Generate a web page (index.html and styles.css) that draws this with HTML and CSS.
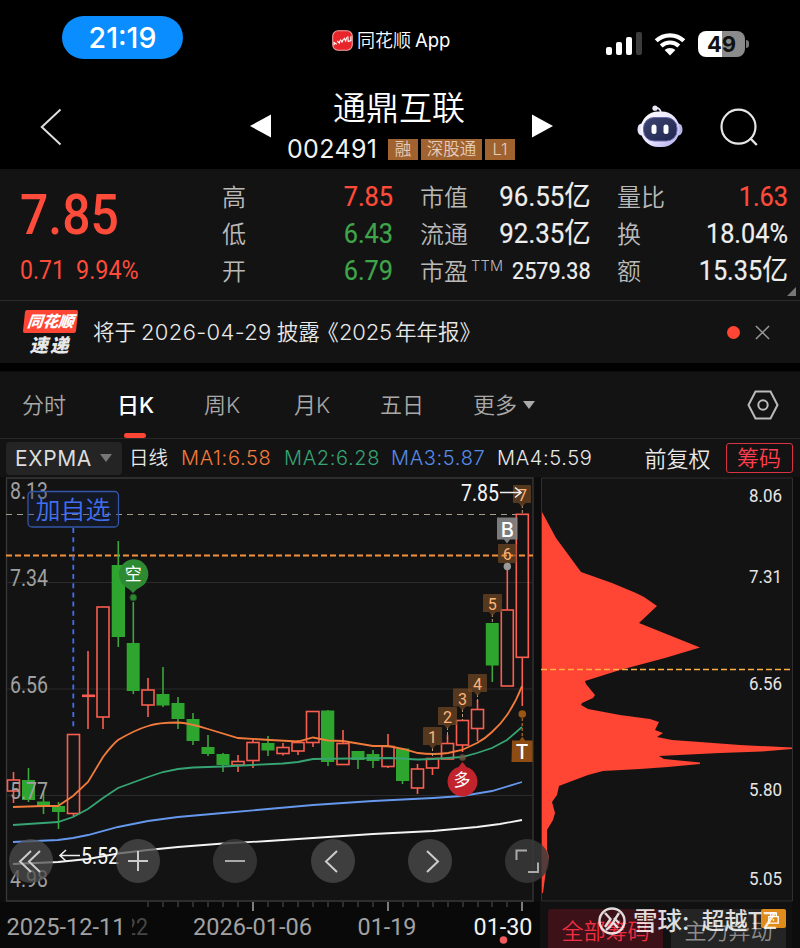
FILE: index.html
```html
<!DOCTYPE html>
<html lang="zh-CN">
<head>
<meta charset="utf-8">
<title>通鼎互联 002491</title>
<link rel="stylesheet" href="styles.css">
</head>
<body>
<div class="status">
  <div class="clock">21:19</div>
  <div class="island">
    <svg class="applogo" viewBox="0 0 20 20"><rect x=".7" y=".7" width="18.6" height="18.6" rx="5" fill="#e8252b" stroke="#f7a6a4" stroke-width="1"/><path d="M2 14.500v-2.500l2.500 1.500M5 10.500l2 2 .5-2.500M8 9l1.500 2.500 1.500-3M11.500 7.500l1.500 3 1-3.500M15 6l.5 5 2.500-1V6" fill="none" stroke="#fff" stroke-width="1.100"/></svg>
    <span class="appname">同花顺</span><span class="appword">App</span>
  </div>
  <div class="sysicons">
    <svg class="signal" viewBox="0 0 36 24"><rect x="0" y="15" width="6" height="8" rx="2" fill="#fff"/><rect x="10" y="10" width="6" height="13" rx="2" fill="#fff"/><rect x="20" y="5" width="6" height="18" rx="2" fill="#fff"/><rect x="30" y="0" width="6" height="23" rx="2" fill="#3c3c3c"/></svg>
    <svg class="wifi" viewBox="0 0 32 24"><path d="M2.200 8.800a20 20 0 0 1 27.600 0" fill="none" stroke="#fff" stroke-width="4.300"/><path d="M7.200 14a12.700 12.700 0 0 1 17.600 0" fill="none" stroke="#fff" stroke-width="4"/><path d="M16 23.500l-5.400-5.400a7.800 7.800 0 0 1 10.800 0z" fill="#fff"/></svg>
    <div class="battery"><span>49</span></div><i class="nub"></i>
  </div>
</div>

<header class="head">
  <svg class="back" viewBox="0 0 22 38"><path d="M20.500 1.500L1.800 19l18.700 17.500" fill="none" stroke="#dedede" stroke-width="2"/></svg>
  <svg class="prev" viewBox="0 0 22 24"><path d="M0 12L22 0v24z" fill="#fff"/></svg>
  <div class="stock">
    <h1>通鼎互联</h1>
    <div class="codeline"><span class="code">002491</span><span class="tag t1">融</span><span class="tag t3">深股通</span><span class="tag t1">L1</span></div>
  </div>
  <svg class="next" viewBox="0 0 22 24"><path d="M22 12L0 0v24z" fill="#fff"/></svg>
  <svg class="robot" viewBox="0 0 46 44">
    <defs><linearGradient id="shell" x1="0" y1="0" x2="1" y2="1"><stop offset="0" stop-color="#fff"/><stop offset=".55" stop-color="#e8e4ff"/><stop offset="1" stop-color="#a9a6e8"/></linearGradient>
    <linearGradient id="face" x1="0" y1="0" x2="1" y2="1"><stop offset="0" stop-color="#3d4670"/><stop offset="1" stop-color="#1e2550"/></linearGradient></defs>
    <path d="M17.500 3c4-.5 6 1 6.500 5" fill="none" stroke="#e6e6f4" stroke-width="1.600"/><circle cx="18" cy="3.200" r="2.600" fill="#e9e9f7"/>
    <ellipse cx="4.500" cy="24.500" rx="4" ry="6" fill="#e5e5fa"/><ellipse cx="41.500" cy="24.500" rx="4" ry="6" fill="#b6b3e8"/>
    <rect x="3.500" y="6.500" width="39" height="35.500" rx="17.700" fill="url(#shell)"/><rect x="6.500" y="12.500" width="33.500" height="23.500" rx="10.500" fill="url(#face)" stroke="#6c6aa8" stroke-width="1"/>
    <rect x="14.500" y="19.500" width="5" height="9.500" rx="2.500" fill="#fff"/><rect x="26.500" y="19.500" width="5" height="9.500" rx="2.500" fill="#fff"/>
  </svg>
  <svg class="search" viewBox="0 0 40 40"><circle cx="19.500" cy="18.700" r="17" fill="none" stroke="#e6e6e6" stroke-width="2.200"/><path d="M31 30l6.800 7" stroke="#e6e6e6" stroke-width="2.400"/></svg>
</header>

<section class="quote">
  <div class="price"><div class="last"><b>7.85</b></div><div class="chg"><span>0.71</span><span>9.94%</span></div></div>
  <dl class="c1"><dt>高</dt><dd class="red">7.85</dd><dt>低</dt><dd class="green">6.43</dd><dt>开</dt><dd class="green">6.79</dd></dl>
  <dl class="c2"><dt>市值</dt><dd>96.55<em>亿</em></dd><dt>流通</dt><dd>92.35<em>亿</em></dd><dt>市盈<sup>TTM</sup></dt><dd class="small">2579.38</dd></dl>
  <dl class="c3"><dt>量比</dt><dd class="red">1.63</dd><dt>换</dt><dd>18.04%</dd><dt>额</dt><dd>15.35<em>亿</em></dd></dl>
  <i class="corner"></i>
</section>

<section class="notice">
  <div class="brand"><span class="flag">同花顺</span><span class="sudi">速递</span></div>
  <p>将于<span class="d1">2026-04-29</span>披露<span class="lq">《</span><span class="d2">2025</span>年年报》</p>
  <i class="dot"></i>
  <svg class="close" viewBox="0 0 16 16"><path d="M1 1l14 14M15 1L1 15" stroke="#999" stroke-width="1.600"/></svg>
</section>

<nav class="tabs">
  <span>分时</span><span class="on">日K</span><span>周K</span><span>月K</span><span>五日</span><span>更多<i></i></span>
  <svg class="hex" viewBox="0 0 32 30"><path d="M8.500 1.500h15L30.500 15l-7 13.500h-15L1.500 15z" fill="none" stroke="#bbb" stroke-width="2"/><circle cx="16" cy="15" r="4.700" fill="none" stroke="#bbb" stroke-width="2"/></svg>
</nav>

<div class="ind">
  <div class="expma">EXPMA<i></i></div><span class="period">日线</span>
  <span class="ma m1">MA1:6.58</span><span class="ma m2">MA2:6.28</span><span class="ma m3">MA3:5.87</span><span class="ma m4">MA4:5.59</span>
  <span class="adj">前复权</span><span class="chip">筹码</span>
</div>

<main class="charts">
  <svg class="kline" viewBox="0 477 540 471">
    <rect x="0" y="902" width="540" height="46" fill="#090909"/>
    <path d="M6.500 901V478H533v423z" fill="#131313" stroke="#383838" stroke-width="1.300"/>
    <path d="M7 582.500h526M7 689h526M7 795.500h526" stroke="#2b2b2b"/>
    <g class="axis"><text x="10" y="498.500" textLength="38" lengthAdjust="spacingAndGlyphs">8.13</text><text x="10" y="586" textLength="38" lengthAdjust="spacingAndGlyphs">7.34</text><text x="10" y="692.500" textLength="38" lengthAdjust="spacingAndGlyphs">6.56</text></g>
    <path d="M6 514.500h516" stroke="#a79c8a" stroke-width="1.200" stroke-dasharray="6 5"/>
    <path d="M6 555.500h527" stroke="#f5923c" stroke-width="1.800" stroke-dasharray="6 3"/>
    <rect x="28" y="491.500" width="90.500" height="35.500" rx="4" fill="#14234a" fill-opacity=".3" stroke="#3555a8" stroke-width="1.300"/>
    <text x="35.500" y="519" class="add" textLength="75">加自选</text>
    <path d="M73.300 528v202" stroke="#3f6ff0" stroke-width="1.800" stroke-dasharray="5 4.200"/>
    <g class="up">
      <path d="M13.500 772v8m0 11v12M73.500 813v3M88 651v78M103 717v12M148 678v12m0 15v12M238 755v6m0 5v6M253 739v3m0 18v8"/>
      <path d="M283 743v4m0 7v1.500M298 740v2m0 9v4M313 742v5M343 730v13M388 734v12m0 20v2M417.500 764v5m0 19v6M432.500 768v7M447.500 735v8M462.500 745v7M477.500 700v9m0 19v13M507.300 567v43M522.300 657v49"/>
      <rect x="7.500" y="780" width="12" height="11"/><rect x="67.500" y="734.500" width="12" height="79"/><path d="M82 695.800h13" stroke-width="2.600"/><rect x="97" y="607" width="12" height="110"/><rect x="142" y="690" width="12" height="15"/><rect x="232" y="761.500" width="12" height="3.500"/><rect x="247" y="742.500" width="12" height="18"/>
      <rect x="277" y="747.500" width="12" height="6"/><rect x="292" y="742.500" width="12" height="8.500"/><rect x="306.500" y="711.500" width="12.500" height="31"/><rect x="337" y="743.500" width="12" height="21"/><rect x="382" y="746.500" width="12" height="20"/><rect x="411.500" y="769" width="12" height="19"/><rect x="426.500" y="758.500" width="12" height="9.500"/><rect x="441.500" y="743.500" width="12" height="15.500"/><rect x="456.500" y="720.500" width="12" height="24.500"/><rect x="471.500" y="709.500" width="12" height="19"/><rect x="501.300" y="610" width="12" height="76"/><rect x="516.300" y="514.300" width="12" height="143"/>
    </g>
    <g class="down">
      <path d="M28.500 768v34M43.500 791v23M58.500 802v27M118.300 541v106M133.300 602v92M163 667v40M178 697v32M193 713v32M208 735v21M223 753v19M268 736v20M328 710v56M358 751v18M373 750v18M402.500 748v36M492.300 623v59"/>
      <path d="M22 780h13v20H22zM37 801.500h13v5H37zM52 806h13v6H52zM111.700 565h13.300v72h-13.300zM126.700 643h13v48h-13zM156.500 694h13v11.500h-13zM171.500 703h13v16h-13zM186.500 719h13v22h-13zM201.500 747h13v7h-13zM216.500 754h13v11h-13zM261.500 743h13v7.500h-13zM321 710.500h13.300V762H321zM351.500 751h13v9h-13zM366.500 754h13v7h-13zM396 748.500h13.300V781H396zM485.800 623h13v42.500h-13z" fill="#2ea52f" stroke="none"/>
    </g>
    <g class="lines">
      <path stroke="#f27b3c" d="M13 807L43 806H58L73 796L88 782L103 757Q112 745 118 740Q135 730 148 726Q158 722.500 178 722.500Q188 723 208 729L238 738L270 740L298 741.500L313 737.500L328 740.500L343 741L373 746H388L403 749L418 753Q433 755 448 753L462 750L477 743Q486 738 492 732Q501 724 507 715Q516 702 522 686"/>
      <path stroke="#36a473" d="M13 825L58 822L73 817L88 809L103 798L118 788L148 777L163 772L178 769L193 767.500L223 766.500L253 765L283 763.500L298 762L313 759L390 758L418 759.500L433 759L462 757L477 753L492 748L507 740L522 727"/>
      <path stroke="#6698ee" d="M13 842L58 840L73 838L88 835L118 827L148 821L178 817L223 813L268 809L313 805L373 801L433 798L462 796L492 791L522 782"/>
      <path stroke="#f4f4f4" d="M13 864L58 862L88 859L118 853.500L148 850L178 847L223 843.500L268 841L313 838L373 834L433 831L477 827L500 824L522 820"/>
    </g>
    <g class="axis"><text x="10" y="799" textLength="38" lengthAdjust="spacingAndGlyphs">5.77</text><text x="10" y="886.500" textLength="38" lengthAdjust="spacingAndGlyphs">4.98</text></g>
    <path d="M60 855.500h20M66 850l-6 5.500 6 5.500" fill="none" stroke="#eee" stroke-width="1.600"/><text x="81" y="863.500" class="mark" textLength="38" lengthAdjust="spacingAndGlyphs">5.52</text>
    <g stroke="#b99c79" stroke-dasharray="3 2"><path d="M432.500 748v10M447.500 727v12M462.500 709v11M477.500 694v10M492.300 614v9M522.300 505v8"/></g>
    <g class="flags">
      <path d="M424 727h17q1 0 1 1v17h-6l-3.500 4-3.500-4h-6v-17q0-1 1-1z"/>
      <path d="M439 707h17q1 0 1 1v17h-6l-3.500 4-3.500-4h-6v-17q0-1 1-1z"/>
      <path d="M454 688.500h17q1 0 1 1v17h-6l-3.500 4-3.500-4h-6v-17q0-1 1-1z"/>
      <path d="M469 674h17q1 0 1 1v17h-6l-3.500 4-3.500-4h-6v-17q0-1 1-1z"/>
      <path d="M484 594h17q1 0 1 1v17h-6l-3.500 4-3.500-4h-6v-17q0-1 1-1z"/>
      <rect x="498" y="544" width="18.500" height="19" rx="1"/>
      <path d="M514 485h16q1 0 1 1v17h-5.500l-3.500 4-3.500-4h-5.500v-17q0-1 1-1z"/>
    </g>
    <g class="nums"><text x="432.500" y="743">1</text><text x="447.500" y="723">2</text><text x="462.500" y="704.500">3</text><text x="477.500" y="690">4</text><text x="492.300" y="610">5</text><text x="507.300" y="560">6</text><text x="522.500" y="500.500">7</text></g>
    <text x="461" y="500.500" class="mark" textLength="38" lengthAdjust="spacingAndGlyphs">7.85</text><path d="M500 492.500h21M515 487.500l6 5-6 5" fill="none" stroke="#eee" stroke-width="1.600"/>
    <path d="M497 517.500h20.500v22H510l-3 4-3-4h-7z" fill="#858585" fill-opacity=".92"/><text x="507.200" y="536.500" class="letter">B</text><circle cx="507.300" cy="566.500" r="3.700" fill="#999"/>
    <path d="M502 555.500h11" stroke="#f5923c" stroke-width="1.500" stroke-dasharray="5 2"/>
    <path d="M522.300 718v20" stroke="#9a5a1b" stroke-dasharray="3 2" stroke-width="1.500"/><circle cx="522.300" cy="714" r="3.800" fill="#995616"/>
    <path d="M512 740.500h7.500l2.800-4 2.800 4h7.500V762H511.500z" fill="#8c4c14"/><text x="522" y="758.500" class="letter">T</text>
    <circle cx="133.300" cy="597.500" r="3.500" fill="#2c8730" stroke="#174d1a"/><path d="M119 574a14.700 14.700 0 1 1 27 8c-2 4-8 6-10 8l-3 3-3-3c-2-2-7-4-9-8a15 15 0 0 1-2-8z" fill="#2d8a32"/><text x="133.300" y="580" class="bubble">空</text>
    <circle cx="462.500" cy="757.500" r="3.300" fill="#6f5a45" opacity=".8"/><path d="M462.500 762l-4 5a15 15 0 1 0 8 0z" fill="#c1242c"/><text x="462" y="786" class="bubble">多</text>
    <path d="M148 902v5M163 902v5M178 902v5M193 902v5M208 902v5M223 902v5M238 902v5M268 902v5M283 902v5M298 902v5M313 902v5M328 902v5M343 902v5M358 902v5M373 902v5M403 902v5M418 902v5M433 902v5M448 902v5M463 902v5M478 902v5M492 902v5M507 902v5" stroke="#555"/><path d="M253 902v9M388 902v9M522 902v9" stroke="#bbb" stroke-width="1.300"/>
    <g class="dates"><text x="124" y="934.500" textLength="24" lengthAdjust="spacingAndGlyphs" opacity=".4">22</text><rect x="6" y="912" width="126" height="30" fill="#090909"/><text x="6.500" y="934.500" textLength="119" lengthAdjust="spacingAndGlyphs">2025-12-11</text><text x="193" y="934.500" textLength="119" lengthAdjust="spacingAndGlyphs">2026-01-06</text><text x="357.500" y="934.500" textLength="59" lengthAdjust="spacingAndGlyphs">01-19</text><text x="473.500" y="934.500" textLength="59" lengthAdjust="spacingAndGlyphs" class="now">01-30</text></g>
    <circle cx="503.500" cy="940" r="3.800" fill="#f25a60"/>
  </svg>

  <div class="side">
    <svg class="dist" viewBox="540 477 260 425">
      <path d="M541.500 901V478H792.500v423z" fill="#131313" stroke="#303030"/>
      <path fill="#ff4534" d="M542 512L556 538L581 572L612 583L636 593L644 597L657 606L639 623L700 647.500L665 658L620 670L585 681L586 684L595 695L593 698L582 703L581 705L588 709L620 715L650 719L659 722L655 730L663 733L657 737L672 740L700 742L740 745L792 747.500V749L762 751.500L720 753L659 756L664 759L700 762.500V764L668 767L640 769L603 771L588 775L572 781L559 786L557 795L552 802L555 813L553 820L547 830V850L549 857L546 870L543 893H542z"/>
      <path d="M541 669.500h251" stroke="#ffb040" stroke-width="1.600" stroke-dasharray="6 3"/>
      <g class="prices"><text x="749" y="501.500" textLength="33" lengthAdjust="spacingAndGlyphs">8.06</text><text x="749" y="583" textLength="33" lengthAdjust="spacingAndGlyphs">7.31</text><text x="749" y="689.500" textLength="33" lengthAdjust="spacingAndGlyphs">6.56</text><text x="749" y="795.500" textLength="33" lengthAdjust="spacingAndGlyphs">5.80</text><text x="749" y="885" textLength="33" lengthAdjust="spacingAndGlyphs">5.05</text></g>
    </svg>
    <div class="sidebtns"><span class="all">全部筹码</span><span class="main">主力异动</span></div>
  </div>

  <div class="ctrls">
    <svg viewBox="0 0 44 44"><path d="M22 12L11 22.500 22 33M31 12L20 22.500 31 33"/></svg>
    <svg viewBox="0 0 44 44"><path d="M12 22h20M22 12v20"/></svg>
    <svg viewBox="0 0 44 44" class="dim"><path d="M12 22h20"/></svg>
    <svg viewBox="0 0 44 44"><path d="M26 12L15 22.500 26 33"/></svg>
    <svg viewBox="0 0 44 44"><path d="M19 12l11 10.500L19 33"/></svg>
    <svg viewBox="0 0 44 44" class="dim"><path d="M11.500 21v-9.500H22M33 23.500v9.500H23"/></svg>
  </div>
  <div class="lock"><svg viewBox="0 0 18 16"><path d="M4 6.500h10v7H4zM6 6V2.500h6V6M9 9v2" fill="none" stroke="#fff" stroke-width="1.400"/></svg></div>
  <div class="water"><svg viewBox="0 0 28 28"><circle cx="14" cy="14" r="12.500"/><path d="M7 6l5.500 6-5.500 8M21 6l-7 11c-1 2-3 4-6 6M15.500 16l4.500 5M16 11l5 5"/></svg><span>雪球:</span><span>超越TZ</span></div>
</main>
</body>
</html>
```

FILE: styles.css
```css
* { box-sizing: border-box; }
body { margin: 0; width: 800px; height: 948px; overflow: hidden; background: #000; color: #e8e8e8; font-family: Inter, "Noto Sans CJK SC", sans-serif; font-weight: 350; line-height: 1; }
svg { display: block; flex: none; }
i { font-style: normal; display: block; flex: none; }

.status { height: 80px; display: flex; padding-left: 62px; align-items: flex-start; }
.clock { margin-top: 16px; width: 121px; height: 43px; border-radius: 22px; background: #0a8dff; color: #fff; font-size: 28.500px; font-weight: 450; line-height: 43px; text-align: center; }
.island { margin: 29px 0 0 149px; width: 274px; display: flex; height: 22px; align-items: center; color: #fff; }
.applogo { width: 21px; height: 21px; }
.appname { font-size: 18px; margin: 2px 0 0 4px; }
.appword { font-size: 18.500px; margin-left: 4px; margin-top: 1px; font-weight: 400; }
.sysicons { display: flex; margin-top: 31px; align-items: center; }
.signal { width: 36px; height: 24px; }
.wifi { width: 32px; height: 24px; margin-left: 12px; }
.battery { width: 47px; height: 26px; margin-left: 12px; border-radius: 8px; background: linear-gradient(90deg, #fff 50%, #8b8b8b 50%); color: #111; text-align: center; font-size: 22px; line-height: 26px; font-weight: 700; }
.nub { width: 3px; height: 8px; border-radius: 0 3px 3px 0; background: #777; margin-left: 1px; }

.head { height: 89px; display: flex; align-items: flex-start; padding-left: 40px; }
.back { width: 22px; height: 38px; margin-top: 28px; }
.prev { width: 21px; height: 24px; margin: 34px 0 0 188px; }
.stock { width: 261px; }
.stock h1 { margin: 11px 0 0; padding-right: 5px; font-size: 33px; font-weight: 350; line-height: 34px; text-align: center; color: #fff; }
.codeline { display: flex; align-items: center; margin: 12px 0 0 16px; height: 24px; gap: 3px; }
.code { width: 98px; font-size: 25px; font-weight: 400; color: #f2f2f2; letter-spacing: .35px; }
.tag { height: 21px; background: #a0622f; color: #e4cdb9; font-size: 16.500px; line-height: 21px; text-align: center; }
.t1 { width: 30px; }
.t3 { width: 61px; }
.next { width: 21px; height: 24px; margin-top: 34px; }
.robot { width: 46px; height: 44px; margin: 25px 0 0 84px; }
.search { width: 40px; height: 40px; margin: 28px 0 0 36px; }

.quote { height: 132px; background: #131313; display: flex; position: relative; border-bottom: 1px solid #2b2b2b; font-family: Roboto, "Noto Sans CJK SC", sans-serif; }
.price { width: 222px; padding: 18px 0 0 20px; color: #ff4c3a; }
.last { height: 56px; font-size: 56px; line-height: 56px; }
.last b { display: inline-block; font-weight: 500; transform: scaleX(.89); transform-origin: left; }
.chg { display: flex; margin-top: 15px; font-size: 25px; font-weight: 400; }
.chg span { width: 56px; transform: scaleX(.92); transform-origin: left; }
.chg span + span { transform: scaleX(.935); }
dl { margin: 9px 0 0; display: grid; flex: none; grid-template-columns: max-content minmax(0, 1fr); grid-auto-rows: 37px; align-items: center; height: 112px; }
.c1 { width: 171px; }
.c2 { width: 171px; margin-left: 27px; }
.c3 { width: 171px; margin-left: 26px; }
dt { font-size: 24px; color: #b9b9b9; white-space: nowrap; height: 37px; line-height: 41px; }
dt sup { font-family: Inter; font-size: 14.500px; line-height: 0; vertical-align: 9px; letter-spacing: .3px; margin-left: 3px; }
dd { margin: 0; height: 37px; line-height: 38px; font-size: 27.500px; font-weight: 400; display: flex; justify-content: flex-end; white-space: nowrap; transform: scaleX(.92); transform-origin: right; color: #eee; -webkit-text-stroke: .2px; }
.c2 dd { transform: scaleX(.94); }
dd em { font-style: normal; font-size: 28px; }
.c2 dd.small { font-size: 24px; transform: scaleX(.9); }
dd.red { color: #ff4c3a; }
dd.green { color: #3fa54a; }
.corner { position: absolute; right: 4px; bottom: 4px; border-left: 9px solid transparent; border-bottom: 9px solid #777; }

.notice { height: 62px; background: #131313; display: flex; align-items: center; padding-left: 22px; }
.brand { width: 56px; display: flex; flex-direction: column; align-items: center; font-style: italic; font-weight: 900; }
.flag { width: 53px; height: 23px; line-height: 23px; background: #ff4534; color: #fff; border-radius: 2px; transform: skewX(-6deg); font-size: 15.500px; text-align: center; }
.sudi { font-size: 18.500px; letter-spacing: 2px; margin-top: 3px; height: 19px; color: #e8e8e8; }
.notice p { margin: 1px 0 0 15px; font-size: 21.500px; width: 625px; white-space: nowrap; }
.notice p span { font-size: 22px; letter-spacing: .35px; }
.notice p .lq { margin-left: -3px; }
.notice p .d1 { margin: 0 5px; }
.notice p .d2 { margin-right: 3px; letter-spacing: -.2px; }
.dot { width: 13px; height: 13px; border-radius: 50%; background: #ff4534; margin-left: 9px; }
.close { width: 15px; height: 15px; margin-left: 15px; }

.tabs { margin-top: 8px; height: 68px; background: #131313; border-bottom: 1px solid #292929; border-top: 1px solid #0d0d0d; display: flex; padding-left: 22px; font-size: 22px; color: #a9a9a9; line-height: 66px; }
.tabs span { position: relative; white-space: nowrap; width: 90px; }
.tabs span:first-child { width: 95px; }
.tabs span.on { width: 87px; color: #fff; font-weight: 500; }
.tabs span.on::after { content: ""; position: absolute; left: 7px; bottom: 0; width: 22px; height: 5px; border-radius: 3px; background: #ff4534; }
.tabs span:nth-child(4) { width: 86px; }
.tabs span:nth-child(5) { width: 93px; }
.tabs span:nth-child(6) { width: 274px; display: flex; align-items: center; }
.tabs i { margin-left: 6px; border: 6px solid transparent; border-top: 8px solid #aaa; border-bottom: 0; }
.hex { width: 32px; height: 30px; margin-top: 18px; }

.ind { height: 38px; background: #131313; display: flex; align-items: center; padding: 0 7px 0 6px; white-space: nowrap; }
.ind > * { flex: none; }
.expma { width: 116px; height: 33px; border-radius: 4px; background: #242424; color: #ddd; font-size: 21px; letter-spacing: .6px; font-weight: 400; padding-left: 9px; display: flex; align-items: center; }
.expma i { margin-left: 8px; border: 6px solid transparent; border-top: 8px solid #777; border-bottom: 0; }
.period { margin: 1px 0 0 7px; width: 52px; font-size: 19.500px; }
.ma { letter-spacing: .65px; width: 103px; font-weight: 350; font-size: 20px; }
.m2 { width: 107px; } .m3 { width: 106px; } .m4 { width: 147.500px; }
.m1 { color: #f27b3c; } .m2 { color: #36a473; } .m3 { color: #568be8; }
.adj { font-size: 22px; width: 81px; padding-top: 1px; }
.chip { width: 67px; height: 30px; border: 1px solid #d93242; border-radius: 3px; color: #ff3f50; font-size: 22px; line-height: 28px; text-align: center; }

.charts { position: relative; height: 471px; display: flex; background: #0d0d0d; }
.kline { width: 540px; height: 471px; }
.side { width: 260px; display: flex; flex-direction: column; }
.dist { width: 260px; height: 425px; }
.sidebtns { display: flex; gap: 8px; height: 46px; padding: 7px 0 0 8px; background: #111; border-right: 8px solid #0d0d0d; }
.sidebtns span { width: 115px; height: 39px; border-radius: 3px 3px 0 0; line-height: 45px; text-align: center; font-size: 22px; }
.all { background: #3c1117; color: #f12e43; }
.main { background: #242424; color: #8d8d8d; }
svg text { font-family: Roboto, "Noto Sans CJK SC", sans-serif; font-weight: 400; }
.axis text { font-size: 23px; fill: #a0a0a0; }
svg .mark { font-size: 23px; fill: #f4f4f4; }
.prices text { font-size: 18.500px; fill: #e6e6e6; }
.dates text { font-size: 24px; fill: #a2a2a2; }
.dates .now { fill: #f2f2f2; }
svg .add { font-size: 25px; fill: #3f6ff0; font-weight: 350; }
.up { fill: none; stroke: #fa5e50; stroke-width: 1.600; }
.down { stroke: #3da63e; stroke-width: 1.600; }
.lines { fill: none; stroke-width: 1.800; }
.flags { fill: #724923; fill-opacity: .7; }
.nums text { font-size: 16px; fill: #ffb477; text-anchor: middle; }
svg .letter { font-size: 20px; fill: #fff; text-anchor: middle; font-family: Inter, sans-serif; font-weight: 500; }
.bubble { font-size: 17px; fill: #fff; text-anchor: middle; }
.ctrls { position: absolute; left: 9px; top: 361.500px; display: flex; gap: 53.200px; }
.ctrls svg { width: 44px; height: 44px; border-radius: 50%; background: rgba(78,78,78,.75); fill: none; stroke: #ccc; stroke-width: 2; }
.ctrls svg:nth-child(2) { margin-left: 10px; }
.ctrls .dim { background: rgba(58,58,58,.85); stroke: #aaa; }
.lock { position: absolute; left: 761px; top: 432px; width: 25px; height: 19px; background: #e08c1c; border-radius: 2px; padding: 1px 4px; }
.lock svg { width: 17px; height: 16px; }
.water { position: absolute; left: 598px; top: 430px; display: flex; align-items: center; height: 28px; color: #fff; opacity: .85; font-size: 24.500px; font-weight: 500; white-space: nowrap; }
.water svg { width: 28px; height: 28px; margin-right: 7px; fill: none; stroke: #fff; stroke-width: 2.400; }
.water span + span { margin-left: 12px; font-size: 23px; }
```
